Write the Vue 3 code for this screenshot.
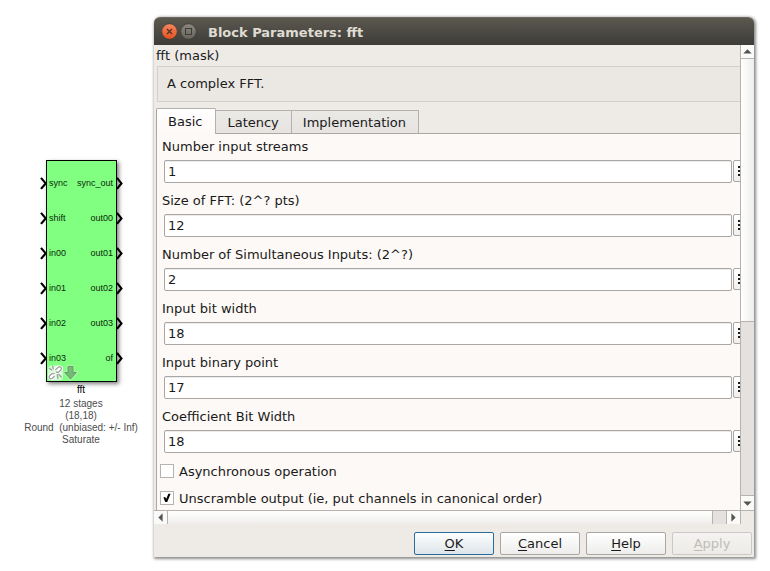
<script setup>
const ports = [
  ['sync', 'sync_out'],
  ['shift', 'out00'],
  ['in00', 'out01'],
  ['in01', 'out02'],
  ['in02', 'out03'],
  ['in03', 'of'],
]
const notes = ['12 stages', '(18,18)', 'Round\u00a0 (unbiased: +/- Inf)', 'Saturate']
const tabs = ['Basic', 'Latency', 'Implementation']
const fields = [
  { label: 'Number input streams', value: '1' },
  { label: 'Size of FFT: (2^? pts)', value: '12' },
  { label: 'Number of Simultaneous Inputs: (2^?)', value: '2' },
  { label: 'Input bit width', value: '18' },
  { label: 'Input binary point', value: '17' },
  { label: 'Coefficient Bit Width', value: '18' },
]
const checks = [
  { label: 'Asynchronous operation', on: false },
  { label: 'Unscramble output (ie, put channels in canonical order)', on: true },
]
const buttons = [
  { key: 'O', rest: 'K', kind: 'primary' },
  { key: 'C', rest: 'ancel', kind: '' },
  { key: 'H', rest: 'elp', kind: '' },
  { key: 'A', rest: 'pply', kind: 'disabled' },
]
</script>

<template>
  <div class="page">
    <section class="model">
      <div class="block">
        <div v-for="p in ports" :key="p[0]" class="port">
          <svg class="chev in" width="8" height="14" viewBox="0 0 8 14"><path d="M1 1.9 L5.7 7.4 L1 12.9" /></svg>
          <span>{{ p[0] }}</span>
          <span>{{ p[1] }}</span>
          <svg class="chev out" width="8" height="14" viewBox="0 0 8 14"><path d="M1 1.9 L5.4 7.4 L1 12.9" /></svg>
        </div>
        <svg class="badges" width="32" height="18" viewBox="0 0 32 18">
          <rect x="1" y="1.5" width="15" height="15" rx="4" fill="#d4fcd4" />
          <g fill="none" stroke-linecap="round" stroke="#fff" stroke-width="4">
            <path d="M7 12 L4.8 14.2 Q2.8 14.5 2.8 12.6 L5.5 9.6 M9 5.5 L11.5 3.4 Q14 3 14 5 L11 8.3" />
          </g>
          <g fill="none" stroke-linecap="round" stroke="#9da39d" stroke-width="1.3">
            <path d="M7.4 12.3 L5.2 14.5 Q3.4 15.4 2.4 14 Q1.6 12.8 2.6 11.8 L5.2 9.4 L7 9.6 M8.6 5.7 L11.2 3.2 Q12.8 2.2 14 3.4 Q15 4.7 13.9 6 L11.2 8.5 L9.4 8" />
            <path d="M2.4 4.4 L4.8 6 M5.6 2.2 L6.3 4.8 M10.3 10.7 L10.9 14.4 M11.8 10.5 L14.3 13" />
          </g>
          <path d="M21 2.5 H26 V8.5 H29.3 L23.5 15 L17.7 8.5 H21 Z" fill="none" stroke="#a8f5a8" stroke-width="3" />
          <path d="M21 2.5 H26 V8.5 H29.3 L23.5 15 L17.7 8.5 H21 Z" fill="#74bc74" stroke="#64a064" stroke-width="1" />
        </svg>
      </div>
      <div class="name">fft</div>
      <div v-for="n in notes" :key="n" class="note">{{ n }}</div>
    </section>

    <section class="window">
      <header class="titlebar">
        <svg width="38" height="18" viewBox="0 0 38 18">
          <defs>
            <linearGradient id="closeFill" x1="0" y1="0" x2="0" y2="1"><stop offset="0" stop-color="#f58860" /><stop offset="1" stop-color="#e2501f" /></linearGradient>
            <linearGradient id="maxFill" x1="0" y1="0" x2="0" y2="1"><stop offset="0" stop-color="#8b887e" /><stop offset="1" stop-color="#66645c" /></linearGradient>
          </defs>
          <circle cx="9.5" cy="8.5" r="7.8" fill="url(#closeFill)" stroke="#3d3c36" stroke-width=".8" />
          <path d="M7 6 L12 11 M12 6 L7 11" stroke="#52301f" stroke-width="1.2" />
          <circle cx="28.5" cy="8.5" r="7.8" fill="url(#maxFill)" stroke="#3d3c36" stroke-width=".8" />
          <rect x="25.5" y="5.5" width="6" height="6" fill="none" stroke="#3c3b37" />
        </svg>
        <h1>Block Parameters: fft</h1>
      </header>

      <div class="body">
        <div class="view">
          <div class="mask">fft (mask)</div>
          <div class="desc">A complex FFT.</div>
          <nav class="tabs">
            <div v-for="(t, i) in tabs" :key="t" class="tab" :class="{ active: i === 0 }">{{ t }}</div>
          </nav>
          <div class="panel">
            <div v-for="f in fields" :key="f.label" class="field">
              <label>{{ f.label }}</label>
              <div class="row">
                <div class="input">{{ f.value }}</div>
                <div class="more"><i></i><i></i><i></i></div>
              </div>
            </div>
            <div class="checks">
              <div v-for="c in checks" :key="c.label" class="check">
                <span class="box">
                  <svg v-if="c.on" width="12" height="12" viewBox="0 0 12 12"><path d="M2.4 5.6 L4.2 5 L5.2 7 L7.4 1.7 L9.6 1.7 L6.2 10 L4.3 10 Z" /></svg>
                </span>
                {{ c.label }}
              </div>
            </div>
          </div>
        </div>
        <div class="vbar">
          <div class="up"><svg width="9" height="5" viewBox="0 0 9 5"><path d="M0.3 4.5 L4.5 0.3 L8.7 4.5 Z" /></svg></div>
          <div class="vthumb"></div>
          <div class="vtrough"></div>
          <div class="down"><svg width="9" height="5" viewBox="0 0 9 5"><path d="M0.3 0.5 L4.5 4.7 L8.7 0.5 Z" /></svg></div>
        </div>
      </div>
      <div class="hbar">
        <div class="left"><svg width="5" height="9" viewBox="0 0 5 9"><path d="M4.6 0.3 L0.4 4.5 L4.6 8.7 Z" /></svg></div>
        <div class="hthumb"></div>
        <div class="htrough"></div>
        <div class="right"><svg width="5" height="9" viewBox="0 0 5 9"><path d="M0.4 0.3 L4.6 4.5 L0.4 8.7 Z" /></svg></div>
        <div class="corner"></div>
      </div>
      <footer>
        <div v-for="b in buttons" :key="b.key" class="btn" :class="b.kind"><span><u>{{ b.key }}</u>{{ b.rest }}</span></div>
      </footer>
    </section>
  </div>
</template>

<style>
body { background: #fff; overflow: hidden; }
</style>

<style scoped>
* { box-sizing: border-box; }
.page {
  width: 770px; height: 571px; display: flex; align-items: flex-start;
  font-family: "DejaVu Sans", sans-serif; font-size: 13px; color: #1a1a1a; white-space: nowrap;
}
.model {
  width: 154px; padding: 160px 0 0 8px; display: flex; flex-direction: column; align-items: center;
  font-family: "Liberation Sans", Arial, sans-serif;
}
.block {
  position: relative; width: 71px; height: 222px; padding-top: 4px;
  border: 1px solid #000; background: #80ff80; box-shadow: 2px 2px 4px rgba(0, 0, 0, .5);
}
.port {
  position: relative; height: 35px; padding: 0 2.6px 0 2.5px; display: flex; justify-content: space-between;
  align-items: center; font-size: 9px; color: #0a2a0a;
}
.chev { position: absolute; top: 11px; fill: none; stroke: #000; stroke-width: 2.2; }
.chev.in { left: -7px; }
.chev.out { left: 69px; }
.badges { position: absolute; left: 0; bottom: -1px; }
.name { height: 15px; line-height: 15px; font-size: 10px; color: #000; }
.note { height: 12px; line-height: 13px; font-size: 10px; color: #4d4d4d; }

.window {
  width: 600px; height: 540px; margin-top: 17px; display: flex; flex-direction: column;
  background: #eeebe7; border-radius: 6px 6px 0 0; box-shadow: 1px 1px 3px 1px rgba(0, 0, 0, .45);
}
.titlebar {
  height: 28px; padding-left: 6px; display: flex; align-items: center; gap: 10px;
  border-radius: 6px 6px 0 0; background: linear-gradient(#5b584f, #3d3c38);
  border-top: 1px solid #6b685e;
}
h1 { margin: 0; padding-top: 2px; font-size: 13px; line-height: 26px; font-weight: bold; color: #dfdbd2; }
.body { height: 465px; display: flex; }
.view { width: 586px; overflow: hidden; }
.mask { height: 21px; padding-left: 2px; line-height: 21px; }
.desc {
  height: 36px; margin-left: 3px; padding-left: 9px; line-height: 34px;
  border: 1px solid #d3d0cc; border-right: 0; background: #ebe8e4;
}
.tabs { height: 31px; padding: 6px 0 0 2px; display: flex; align-items: flex-end; }
.tab {
  height: 23px; padding: 0 12px 0 11px; line-height: 23px; border: 1px solid #b3b0ad; border-left: 0; border-bottom: 0;
  background: linear-gradient(#ebe9e6, #e6e3e0);
}
.tab.active {
  position: relative; height: 26px; margin-bottom: -1px; padding-right: 13px; line-height: 25px;
  border-left: 1px solid #a8a5a2; border-radius: 2px 2px 0 0; background: linear-gradient(#fff, #fdf9f7);
}
.panel {
  height: 378px; margin-left: 2px; padding: 3px 0 0 5px;
  border: 1px solid #aaa7a4; border-width: 1px 0 0 1px; background: #fdf9f6;
}
.field { height: 54px; }
label { display: block; height: 23px; line-height: 19px; }
.row { display: flex; gap: 1px; padding-left: 2px; }
.input {
  flex: none; width: 568px; height: 23px; padding-left: 3px; line-height: 21px;
  border: 1px solid #aaa6a3; border-radius: 2px; background: #fff; box-shadow: inset 0 1px #ececec;
}
.more {
  flex: none; width: 20px; height: 22px; padding: 5px 0 0 4px; display: flex; flex-direction: column; gap: 2px;
  border: 1px solid #aaa6a3; border-radius: 2px; background: linear-gradient(#fff, #f0efee);
}
.more i { width: 2px; height: 2px; background: #1a1a1a; }
.checks { margin: -3px 0 0 -2px; }
.check { height: 27px; line-height: 27px; display: flex; align-items: center; gap: 5px; }
.box { width: 14px; height: 14px; margin-top: -1px; border: 1px solid #b5b2af; background: #fff; display: flex; }
.box path { fill: #000; }

.vbar { width: 14px; border-left: 1px solid #b5b2af; display: flex; flex-direction: column; }
.up, .down, .left, .right { display: flex; align-items: center; justify-content: center; background: #fafaf9; }
.up { height: 14px; border-bottom: 1px solid #b5b2af; }
.vthumb { height: 262px; background: linear-gradient(90deg, #fff, #efeeeb); }
.vtrough { flex: 1; border-top: 1px solid #b5b2af; background: #e4e1de; }
.down { height: 15px; border-top: 1px solid #b5b2af; }
.vbar path, .hbar path { fill: #555351; }
.hbar { height: 14px; display: flex; border-top: 1px solid #b5b2af; }
.left { width: 14px; border-right: 1px solid #b5b2af; }
.left svg { margin-right: 1px; }
.hthumb { width: 544px; background: linear-gradient(#fff, #efeeeb); }
.htrough { width: 14px; border-left: 1px solid #b5b2af; background: #e4e1de; }
.right { width: 15px; border: 1px solid #b5b2af; border-width: 0 1px; }
.corner { width: 13px; }
footer { padding: 8px 2px 0 0; display: flex; justify-content: flex-end; gap: 6px; }
.btn {
  width: 80px; height: 23px; line-height: 22px; text-align: center; border: 1px solid #aaa6a3; border-radius: 2px;
  background: linear-gradient(#fff, #eeedec);
}
.btn u { text-decoration-thickness: 1px; text-underline-offset: 2px; }
.btn.primary { border-color: #2a6c9e; background: linear-gradient(#fdfefe, #dde5ea); }
.btn.disabled { border-color: #cbc8c5; color: #bfbcb9; background: linear-gradient(#f5f3f1, #edebe7); }
</style>
